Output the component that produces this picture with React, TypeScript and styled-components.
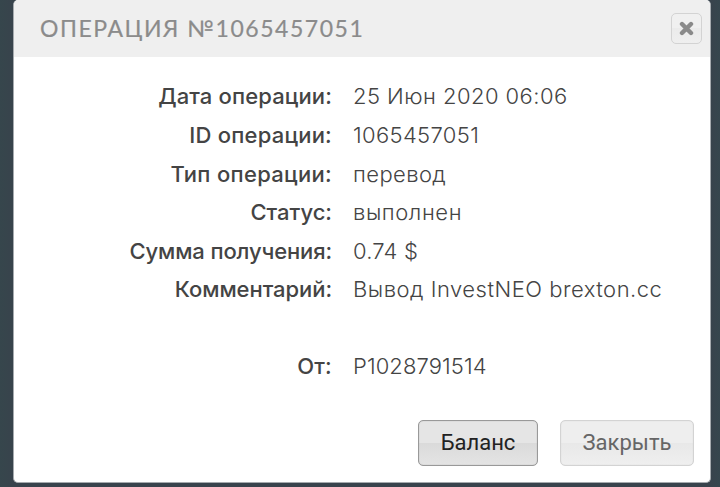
import styled, { createGlobalStyle } from 'styled-components';

const GlobalStyle = createGlobalStyle`
  * {
    box-sizing: border-box;
  }
  body {
    margin: 0;
    overflow: hidden;
    background-color: #38444c;
  }
`;

const Backdrop = styled.div`
  width: 720px;
  height: 487px;
  padding: 0 9px 4px 13px;
  background: linear-gradient(90deg, #36464c 0, #38434c 13px, #38434c 710px, #36464e 100%);
`;

const Dialog = styled.section`
  display: flex;
  flex-direction: column;
  height: 483px;
  background-color: #fff;
  border: 1px solid #a5aaae;
  border-top: none;
  border-radius: 5px;
  overflow: hidden;
`;

const Header = styled.header`
  display: flex;
  flex: none;
  align-items: center;
  justify-content: space-between;
  height: 57px;
  padding: 0 8px 0 26px;
  background-color: #efefef;
`;

const Title = styled.h1`
  margin: 0;
  padding-bottom: 2px;
  font: 400 23px/30px Lato, sans-serif;
  letter-spacing: 1.54px;
  color: #8b8b8b;
  -webkit-text-stroke: 0.2px #8b8b8b;
  white-space: nowrap;
`;

const CloseButton = styled.button`
  display: flex;
  align-items: center;
  justify-content: center;
  width: 31px;
  height: 31px;
  padding: 0;
  background: linear-gradient(#f0f0f0 50%, #ebebeb 50%, #efefef);
  border: 1px solid #d3d3d3;
  border-radius: 5px;
`;

const Details = styled.dl`
  flex: 1;
  margin: 0;
  padding: 20.47px 0 0;
`;

const Row = styled.div<{ $spaced?: boolean }>`
  display: grid;
  grid-template-columns: 318px 1fr;
  column-gap: 21px;
  height: 38.54px;
  margin-top: ${({ $spaced }) => ($spaced ? '38.5px' : 0)};
  font-family: Inter, sans-serif;
  font-size: 22px;
  line-height: 38px;
  white-space: nowrap;
`;

const Label = styled.dt<{ $spacing: number }>`
  justify-self: end;
  font-weight: 500;
  letter-spacing: ${({ $spacing }) => $spacing}px;
  color: #444;
`;

const Value = styled.dd<{ $spacing: number }>`
  margin: 0;
  font-weight: 300;
  letter-spacing: ${({ $spacing }) => $spacing}px;
  color: #444;
`;

const Footer = styled.footer`
  display: flex;
  justify-content: flex-end;
  gap: 22px;
  padding: 0 16px 16px 0;
`;

const Button = styled.button<{ $muted?: boolean }>`
  width: ${({ $muted }) => ($muted ? 134 : 120)}px;
  height: 46px;
  padding: 0;
  font: 400 22px/44px Roboto, sans-serif;
  color: ${({ $muted }) => ($muted ? '#666' : '#222')};
  background: ${({ $muted }) =>
    $muted ? 'linear-gradient(#eee 50%, #e8e8e8 50%, #efefef)' : 'linear-gradient(#e5e5e5 50%, #dadada 50%, #e4e4e4)'};
  border: 1px solid ${({ $muted }) => ($muted ? '#d3d3d3' : '#999')};
  border-radius: 5px;
  box-shadow: inset 0 0 1px ${({ $muted }) => ($muted ? '#ccc' : '#999')};
`;

const rows = [
  { label: 'Дата операции:', value: '25 Июн 2020 06:06', labelSpacing: 0.13, valueSpacing: 0.45 },
  { label: 'ID операции:', value: '1065457051', labelSpacing: 0.22, valueSpacing: 0.35 },
  { label: 'Тип операции:', value: 'перевод', labelSpacing: 0.3, valueSpacing: 0.4 },
  { label: 'Статус:', value: 'выполнен', labelSpacing: 0, valueSpacing: 0.57 },
  { label: 'Сумма получения:', value: '0.74 $', labelSpacing: -0.12, valueSpacing: 0.2 },
  { label: 'Комментарий:', value: 'Вывод InvestNEO brexton.cc', labelSpacing: -0.06, valueSpacing: 0.5 },
  { label: 'От:', value: 'P1028791514', labelSpacing: 0.2, valueSpacing: 0.1, spaced: true },
];

const App = () => (
  <Backdrop>
    <GlobalStyle />
    <Dialog>
      <Header>
        <Title>ОПЕРАЦИЯ №1065457051</Title>
        <CloseButton aria-label="Закрыть">
          <svg width="15" height="15" viewBox="0 0 15 15">
            <path d="M3 3l9 9M12 3l-9 9" stroke="#8a8a8a" strokeWidth="4.4" strokeLinecap="round" />
          </svg>
        </CloseButton>
      </Header>
      <Details>
        {rows.map(({ label, value, labelSpacing, valueSpacing, spaced }) => (
          <Row key={label} $spaced={spaced}>
            <Label $spacing={labelSpacing}>{label}</Label>
            <Value $spacing={valueSpacing}>{value}</Value>
          </Row>
        ))}
      </Details>
      <Footer>
        <Button>Баланс</Button>
        <Button $muted>Закрыть</Button>
      </Footer>
    </Dialog>
  </Backdrop>
);

export default App;
